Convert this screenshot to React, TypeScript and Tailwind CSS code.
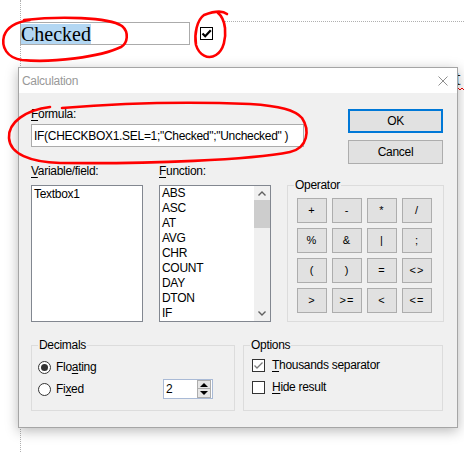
import type { ReactNode } from "react"

const ui = { fontFamily: '"Liberation Sans", Arial, sans-serif' }

function Btn({ children, className = "" }: { children: ReactNode; className?: string }) {
  return (
    <div className={`flex items-center justify-center bg-[#e1e1e1] border border-[#adadad] ${className}`}>
      {children}
    </div>
  )
}

function Radio({ checked }: { checked?: boolean }) {
  return (
    <div className="w-[13px] h-[13px] rounded-full border border-[#333] bg-white flex items-center justify-center">
      {checked && <div className="w-[7px] h-[7px] rounded-full bg-[#333]" />}
    </div>
  )
}

function Check({ checked }: { checked?: boolean }) {
  return (
    <div className="w-[13px] h-[13px] border border-[#333] bg-white flex items-center justify-center">
      {checked && (
        <svg width="11" height="11" viewBox="0 0 11 11">
          <path d="M1.5 5.5 L4 8 L9.5 2.5" fill="none" stroke="#7a7a7a" strokeWidth="1.3" />
        </svg>
      )}
    </div>
  )
}

function Group({ label, className = "", children }: { label: string; className?: string; children: ReactNode }) {
  return (
    <div className={`relative border border-[#dcdcdc] ${className}`}>
      <span className="absolute -top-[8px] left-[6px] bg-[#f0f0f0] px-[1px] leading-[15px]">{label}</span>
      {children}
    </div>
  )
}

const ops = ["+", "-", "*", "/", "%", "&", "|", ";", "(", ")", "=", "<>", ">", ">=", "<", "<="]
const funcs = ["ABS", "ASC", "AT", "AVG", "CHR", "COUNT", "DAY", "DTON", "IF"]

export default function App() {
  return (
    <div className="relative w-[464px] h-[452px] bg-white overflow-hidden">
      {/* page guides */}
      <div className="absolute left-[20px] top-0 h-full border-l border-dotted border-[#b0b0b0]" />
      <div className="absolute left-[224px] right-0 top-[21px] border-t border-dotted border-[#b0b0b0]" />

      {/* document fields */}
      <div className="absolute left-[20px] top-[22px] flex items-center gap-[10px]">
        <div className="w-[170px] h-[23px] border border-[#ababab] bg-white flex items-end">
          <span
            className="bg-[#b3d7f3] text-[20px] leading-[20px] h-[20px] text-black"
            style={{ fontFamily: '"Liberation Serif", "Times New Roman", serif' }}
          >
            Checked
          </span>
        </div>
        <div className="w-[13px] h-[13px] border border-black bg-white flex items-center justify-center">
          <svg width="11" height="11" viewBox="0 0 11 11">
            <path d="M1.5 5.5 L4.2 8.2 L9.8 2.2" fill="none" stroke="#000" strokeWidth="2.2" />
          </svg>
        </div>
      </div>

      <span
        className="absolute left-[455px] top-[67px] text-[20px] leading-[22px] text-[#2a1a00]"
        style={{ fontFamily: '"Liberation Serif", serif' }}
      >
        t
      </span>
      <svg className="absolute left-[456px] top-[87px]" width="8" height="4" viewBox="0 0 8 4">
        <path d="M0 3 L2 1 L4 3 L6 1 L8 3" fill="none" stroke="#e00" strokeWidth="1" />
      </svg>

      {/* dialog */}
      <div
        className="absolute left-[18px] top-[67px] w-[440px] h-[361px] border border-[#a5a5a5] flex flex-col text-[12px] tracking-[-0.3px] text-black shadow-[0_3px_12px_rgba(0,0,0,0.28)]"
        style={ui}
      >
        <div className="h-[25px] bg-white flex items-center justify-between pl-[3px] pr-[9px]">
          <span className="text-[#999]">Calculation</span>
          <svg width="10" height="10" viewBox="0 0 10 10">
            <path d="M0.5 0.5 L9.5 9.5 M9.5 0.5 L0.5 9.5" stroke="#8f8f8f" strokeWidth="1" />
          </svg>
        </div>

        <div className="flex-1 bg-[#f0f0f0] pl-[12px] pt-[14px]">
          {/* formula row */}
          <div className="h-[57px] flex">
            <div className="w-[273px] flex flex-col">
              <span className="leading-[15px]">
                <u className="underline-offset-2">F</u>ormula:
              </span>
              <div className="mt-[2px] h-[23px] border border-[#ababab] bg-white flex items-center px-[2px] whitespace-nowrap">
                IF(CHECKBOX1.SEL=1;"Checked";"Unchecked" )
              </div>
            </div>
            <div className="ml-[44px] pt-[2px] flex flex-col gap-[7px]">
              <div className="w-[95px] h-[24px] flex items-center justify-center bg-[#e1e1e1] border-2 border-[#0078d7]">
                OK
              </div>
              <Btn className="w-[95px] h-[25px]">Cancel</Btn>
            </div>
          </div>

          {/* lists + operators */}
          <div className="flex">
            <div className="w-[112px] flex flex-col">
              <span className="leading-[15px]">
                <u className="underline-offset-2">V</u>ariable/field:
              </span>
              <div className="mt-[6px] h-[137px] border border-[#828790] bg-white pt-[1px] pl-[2px] leading-[15px]">
                Textbox1
              </div>
            </div>
            <div className="ml-[16px] w-[112px] flex flex-col">
              <span className="leading-[15px]">
                <u className="underline-offset-2">F</u>unction:
              </span>
              <div className="mt-[6px] h-[137px] border border-[#828790] bg-white flex">
                <div className="flex-1 pl-[2px] leading-[15px]">
                  {funcs.map((f) => (
                    <div key={f}>{f}</div>
                  ))}
                </div>
                <div className="w-[16px] bg-[#f0f0f0] flex flex-col">
                  <div className="h-[14px] flex items-center justify-center">
                    <svg width="8" height="5" viewBox="0 0 8 5">
                      <path d="M0.5 4.5 L4 1 L7.5 4.5" fill="none" stroke="#606060" strokeWidth="1.4" />
                    </svg>
                  </div>
                  <div className="h-[28px] bg-[#cdcdcd]" />
                  <div className="flex-1" />
                  <div className="h-[16px] flex items-center justify-center">
                    <svg width="8" height="5" viewBox="0 0 8 5">
                      <path d="M0.5 0.5 L4 4 L7.5 0.5" fill="none" stroke="#606060" strokeWidth="1.4" />
                    </svg>
                  </div>
                </div>
              </div>
            </div>
            <Group label="Operator" className="ml-[16px] mt-[21px] w-[157px] h-[137px] pl-[9px] pt-[12px]">
              <div className="grid grid-cols-[repeat(4,30px)] gap-[5px]">
                {ops.map((o) => (
                  <Btn key={o} className="h-[25px] text-[11px] tracking-[1px]">
                    {o}
                  </Btn>
                ))}
              </div>
            </Group>
          </div>

          {/* bottom groups */}
          <div className="mt-[23px] flex gap-[8px]">
            <Group label="Decimals" className="w-[204px] h-[66px] pl-[6px] pr-[21px] pt-[10px]">
              <div className="h-[22px] flex items-center gap-[5px]">
                <Radio checked />
                <span>
                  Flo<u className="underline-offset-2">a</u>ting
                </span>
              </div>
              <div className="h-[22px] flex items-center gap-[5px]">
                <Radio />
                <span>
                  Fi<u className="underline-offset-2">x</u>ed
                </span>
                <div className="ml-auto w-[50px] h-[20px] border border-[#a9bad6] bg-white flex items-center">
                  <span className="flex-1 pl-[2px]">2</span>
                  <div className="mr-px flex flex-col">
                    <div className="w-[14px] h-[9px] bg-[#e6e6e6] border border-[#adadad] flex items-center justify-center">
                      <svg width="8" height="4" viewBox="0 0 8 4">
                        <path d="M0 4 L4 0 L8 4 Z" fill="#000" />
                      </svg>
                    </div>
                    <div className="w-[14px] h-[9px] bg-[#e6e6e6] border border-[#adadad] border-t-0 flex items-center justify-center">
                      <svg width="8" height="4" viewBox="0 0 8 4">
                        <path d="M0 0 L8 0 L4 4 Z" fill="#000" />
                      </svg>
                    </div>
                  </div>
                </div>
              </div>
            </Group>
            <Group label="Options" className="w-[200px] h-[66px] pl-[8px] pt-[8px]">
              <div className="h-[22px] flex items-center gap-[7px]">
                <Check checked />
                <span>
                  <u className="underline-offset-2">T</u>housands separator
                </span>
              </div>
              <div className="h-[22px] flex items-center gap-[7px]">
                <Check />
                <span>
                  <u className="underline-offset-2">H</u>ide result
                </span>
              </div>
            </Group>
          </div>
        </div>
      </div>

      {/* red hand-drawn marks */}
      <svg className="absolute inset-0 pointer-events-none" width="464" height="452" viewBox="0 0 464 452">
        <g fill="none" stroke="#ff0000" strokeWidth="2.6" strokeLinecap="round" strokeLinejoin="round">
          <path d="M24 20 C60 16 108 17 122 26 C129 32 128 43 121 47 C100 57 52 63 22 60 C7 58 1 47 4 36 C7 27 15 22 30 20" />
          <path d="M227 14 C222 10 212 12 204 15 C197 20 194 34 196 45 C199 55 208 60 216 55 C224 50 226 38 225 28 C224 20 222 16 218 13" />
          <path d="M50 107 C26 110 8 122 9 138 C10 154 30 162 60 163 C150 164 250 160 290 152 C308 148 310 130 302 118 C295 110 280 106 250 104 C180 101 110 104 62 108" />
        </g>
      </svg>
    </div>
  )
}
